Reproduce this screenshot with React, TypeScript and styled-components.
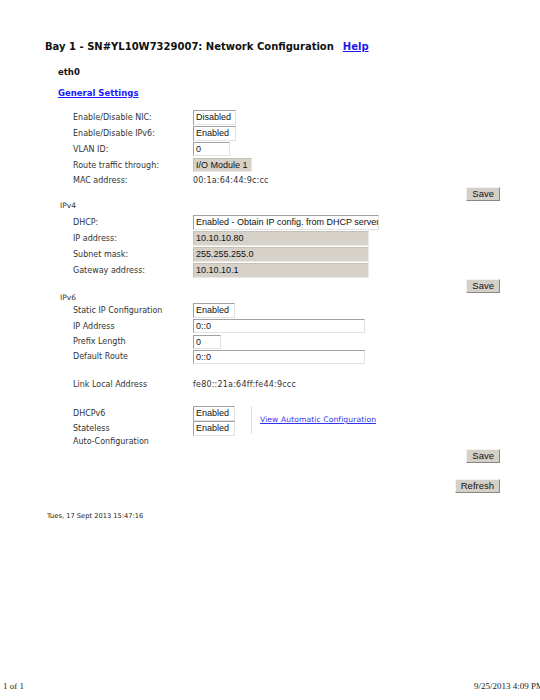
import React from 'react';
import styled, { createGlobalStyle } from 'styled-components';

type FieldProps = {
    w: number;
    gray?: boolean;
    h?: number;
};

type RowProps = {
    h?: number;
    mt?: number;
};

const GlobalStyle = createGlobalStyle`
    html, body {
        margin: 0;
        padding: 0;
        background: #fff;
    }
`;

const Page = styled.div`
    width: 540px;
    height: 700px;
    display: flex;
    flex-direction: column;
    overflow: hidden;
    background: #fff;
    font-family: "DejaVu Sans", Verdana, sans-serif;
    color: #222;
`;

const Main = styled.div`
    flex: 1;
    padding: 39px 0 0 45px;
    width: 455px;
`;

const Title = styled.div`
    display: flex;
    align-items: center;
    gap: 9px;
    height: 14px;
    font-size: 10px;
    font-weight: bold;
    color: #111;
`;

const HelpLink = styled.a`
    color: #1a1aee;
    text-decoration: underline;
`;

const SubHead = styled.div`
    margin: 13px 0 0 13px;
    height: 12px;
    line-height: 12px;
    font-size: 8.5px;
    font-weight: bold;
    color: #111;
`;

const SectionLink = styled.a`
    display: block;
    margin: 9px 0 0 13px;
    height: 12px;
    line-height: 12px;
    font-size: 8.5px;
    font-weight: bold;
    color: #1a1aff;
    text-decoration: underline;
    width: fit-content;
`;

const Form = styled.div`
    margin: 10px 0 0 15px;
    display: flex;
    flex-direction: column;
`;

const Row = styled.div<RowProps>`
    display: flex;
    align-items: center;
    height: ${(p) => p.h ?? 16}px;
    margin-top: ${(p) => p.mt ?? 0}px;
`;

const Label = styled.div`
    width: 133px;
    flex-shrink: 0;
    padding-left: 13px;
    box-sizing: border-box;
    font-size: 8px;
    color: #333;
`;

const Value = styled.div`
    font-size: 8px;
    color: #333;
    letter-spacing: 0.2px;
`;

const Field = styled.span<FieldProps>`
    display: inline-block;
    box-sizing: border-box;
    width: ${(p) => p.w}px;
    height: ${(p) => p.h ?? 15}px;
    line-height: ${(p) => (p.h ?? 15) - 2}px;
    padding-left: 2px;
    font-family: "Liberation Sans", Arial, sans-serif;
    font-size: 9px;
    color: #111;
    white-space: nowrap;
    overflow: hidden;
    background: ${(p) => (p.gray ? '#d6d2ca' : '#fff')};
    border: 1px solid;
    border-color: ${(p) => (p.gray ? '#c4c0b8 #ece9e4 #ece9e4 #c4c0b8' : '#a0a0a0 #e2e2e2 #e2e2e2 #a0a0a0')};
`;

const GroupHead = styled.div<RowProps>`
    height: ${(p) => p.h ?? 10}px;
    line-height: ${(p) => p.h ?? 10}px;
    margin-top: ${(p) => p.mt ?? 0}px;
    font-size: 7.5px;
    color: #333;
`;

const ButtonRow = styled.div<RowProps>`
    display: flex;
    justify-content: flex-end;
    margin-top: ${(p) => p.mt ?? 0}px;
`;

const Button = styled.button`
    height: 14px;
    padding: 0 5px;
    font-family: "Liberation Sans", Arial, sans-serif;
    font-size: 9.5px;
    line-height: 12px;
    color: #111;
    background: #d4d0c8;
    border: 1px solid;
    border-color: #f4f2ee #8a8780 #8a8780 #f4f2ee;
    border-radius: 0;
    cursor: pointer;
`;

const AutoBlock = styled.div`
    display: flex;
    margin-top: 14px;
`;

const AutoFields = styled.div`
    display: flex;
    flex-direction: column;
`;

const AutoRow = styled(Row)`
    align-items: flex-start;
`;

const AutoLabel = styled(Label)`
    line-height: 13px;
    padding-top: 1px;
`;

const Separator = styled.div`
    width: 1px;
    height: 28px;
    margin: 1px 8px 0 16px;
    background: #dcdcdc;
`;

const AutoLink = styled.a`
    margin-top: 10px;
    height: 10px;
    font-size: 7.6px;
    color: #3333ee;
    text-decoration: underline;
    letter-spacing: 0.1px;
`;

const Stamp = styled.div`
    margin: 18px 0 0 2px;
    height: 10px;
    line-height: 10px;
    font-size: 6.7px;
    color: #222;
`;

const Footer = styled.div`
    display: flex;
    justify-content: space-between;
    height: 12px;
    line-height: 12px;
    margin-bottom: 8px;
    padding-left: 3px;
    font-family: "Liberation Serif", "Times New Roman", serif;
    font-size: 9px;
    color: #222;
`;

const FooterRight = styled.span`
    flex-shrink: 0;
    margin-right: -4px;
`;

const general = [
    { label: 'Enable/Disable NIC:', value: 'Disabled', w: 43 },
    { label: 'Enable/Disable IPv6:', value: 'Enabled', w: 43 },
    { label: 'VLAN ID:', value: '0', w: 37, h: 14 },
    { label: 'Route traffic through:', value: 'I/O Module 1', w: 59, gray: true, h: 14 },
];

const ipv4 = [
    { label: 'DHCP:', value: 'Enabled - Obtain IP config. from DHCP server', w: 186 },
    { label: 'IP address:', value: '10.10.10.80', w: 176, gray: true },
    { label: 'Subnet mask:', value: '255.255.255.0', w: 176, gray: true },
    { label: 'Gateway address:', value: '10.10.10.1', w: 176, gray: true },
];

const ipv6 = [
    { label: 'Static IP Configuration', value: 'Enabled', w: 42, rh: 16 },
    { label: 'IP Address', value: '0::0', w: 172, h: 14, rh: 16 },
    { label: 'Prefix Length', value: '0', w: 28, h: 14, rh: 15 },
    { label: 'Default Route', value: '0::0', w: 172, h: 14, rh: 15 },
];

const App: React.FC = () => {
    return (
        <>
            <GlobalStyle />
            <Page>
                <Main>
                    <Title>
                        <span>Bay 1 - SN#YL10W7329007: Network Configuration</span>
                        <HelpLink href="#">Help</HelpLink>
                    </Title>
                    <SubHead>eth0</SubHead>
                    <SectionLink href="#">General Settings</SectionLink>
                    <Form>
                        {general.map((f) => (
                            <Row key={f.label}>
                                <Label>{f.label}</Label>
                                <Field w={f.w} h={f.h} gray={f.gray}>{f.value}</Field>
                            </Row>
                        ))}
                        <Row h={14}>
                            <Label>MAC address:</Label>
                            <Value>00:1a:64:44:9c:cc</Value>
                        </Row>
                        <ButtonRow>
                            <Button>Save</Button>
                        </ButtonRow>

                        <GroupHead>IPv4</GroupHead>
                        {ipv4.map((f, i) => (
                            <Row key={f.label} mt={i === 0 ? 3 : 0}>
                                <Label>{f.label}</Label>
                                <Field w={f.w} gray={f.gray}>{f.value}</Field>
                            </Row>
                        ))}
                        <ButtonRow mt={1}>
                            <Button>Save</Button>
                        </ButtonRow>

                        <GroupHead h={8} mt={1}>IPv6</GroupHead>
                        {ipv6.map((f) => (
                            <Row key={f.label} h={f.rh}>
                                <Label>{f.label}</Label>
                                <Field w={f.w} h={f.h}>{f.value}</Field>
                            </Row>
                        ))}
                        <Row h={14} mt={13}>
                            <Label>Link Local Address</Label>
                            <Value>fe80::21a:64ff:fe44:9ccc</Value>
                        </Row>

                        <AutoBlock>
                            <AutoFields>
                                <Row>
                                    <Label>DHCPv6</Label>
                                    <Field w={42}>Enabled</Field>
                                </Row>
                                <AutoRow h={27}>
                                    <AutoLabel>
                                        Stateless
                                        <br />
                                        Auto-Configuration
                                    </AutoLabel>
                                    <Field w={42}>Enabled</Field>
                                </AutoRow>
                            </AutoFields>
                            <Separator />
                            <AutoLink href="#">View Automatic Configuration</AutoLink>
                        </AutoBlock>
                        <ButtonRow mt={1}>
                            <Button>Save</Button>
                        </ButtonRow>
                        <ButtonRow mt={16}>
                            <Button>Refresh</Button>
                        </ButtonRow>
                    </Form>
                    <Stamp>Tues, 17 Sept 2013 15:47:16</Stamp>
                </Main>
                <Footer>
                    <span>1 of 1</span>
                    <FooterRight>9/25/2013 4:09 PM</FooterRight>
                </Footer>
            </Page>
        </>
    );
};

export default App;
